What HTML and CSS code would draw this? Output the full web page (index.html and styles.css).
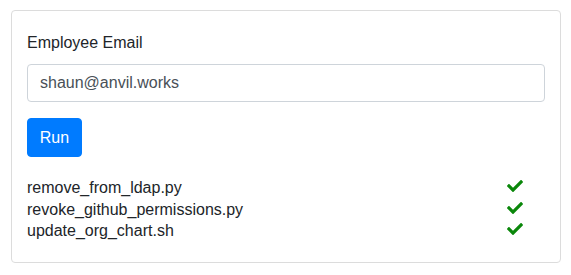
FILE: index.html
```html
<!DOCTYPE html>
<html>
<head>
<meta charset="utf-8">
<link rel="stylesheet" href="styles.css">
</head>
<body>
<div class="card">
  <label class="label" for="email">Employee Email</label>
  <input id="email" class="input" type="text" value="shaun@anvil.works">
  <button class="btn">Run</button>
  <div class="tasks">
    <div class="task"><span class="name">remove_from_ldap.py</span><span class="status"><svg class="check" viewBox="0 0 512 512"><path d="M173.898 439.404l-166.4-166.4c-9.997-9.997-9.997-26.206 0-36.204l36.203-36.204c9.997-9.998 26.207-9.998 36.204 0L192 312.69 432.095 72.596c9.997-9.997 26.207-9.997 36.204 0l36.203 36.204c9.997 9.997 9.997 26.206 0 36.204l-294.4 294.401c-9.998 9.997-26.207 9.997-36.204-.001z"/></svg></span></div>
    <div class="task"><span class="name">revoke_github_permissions.py</span><span class="status"><svg class="check" viewBox="0 0 512 512"><path d="M173.898 439.404l-166.4-166.4c-9.997-9.997-9.997-26.206 0-36.204l36.203-36.204c9.997-9.998 26.207-9.998 36.204 0L192 312.69 432.095 72.596c9.997-9.997 26.207-9.997 36.204 0l36.203 36.204c9.997 9.997 9.997 26.206 0 36.204l-294.4 294.401c-9.998 9.997-26.207 9.997-36.204-.001z"/></svg></span></div>
    <div class="task"><span class="name">update_org_chart.sh</span><span class="status"><svg class="check" viewBox="0 0 512 512"><path d="M173.898 439.404l-166.4-166.4c-9.997-9.997-9.997-26.206 0-36.204l36.203-36.204c9.997-9.998 26.207-9.998 36.204 0L192 312.69 432.095 72.596c9.997-9.997 26.207-9.997 36.204 0l36.203 36.204c9.997 9.997 9.997 26.206 0 36.204l-294.4 294.401c-9.998 9.997-26.207 9.997-36.204-.001z"/></svg></span></div>
  </div>
</div>
</body>
</html>
```

FILE: styles.css
```css
html, body {
  margin: 0;
  padding: 0;
  background: #fff;
}
body {
  padding: 10px 10px 0 11px;
  font-family: "Liberation Sans", Arial, Helvetica, sans-serif;
  font-size: 16px;
  color: #212529;
}
.card {
  width: 550px;
  box-sizing: border-box;
  border: 1px solid #dcdcdc;
  border-radius: 4px;
  padding: 20px 15px 20px 15px;
  display: flex;
  flex-direction: column;
  align-items: flex-start;
}
.label {
  display: block;
  line-height: 24px;
  margin-bottom: 9px;
}
.input {
  display: block;
  width: 100%;
  box-sizing: border-box;
  height: 38px;
  padding: 6px 12px;
  border: 1px solid #ced4da;
  border-radius: 4px;
  font-family: inherit;
  font-size: 16px;
  color: #495057;
  background: #fff;
  margin: 0;
}
.btn {
  margin-top: 16px;
  height: 39px;
  width: 55px;
  padding: 0;
  border: 1px solid #007bff;
  border-radius: 4px;
  background: #007bff;
  color: #fff;
  font-family: inherit;
  font-size: 16px;
}
.tasks {
  margin-top: 20px;
  width: 100%;
}
.task {
  display: grid;
  grid-template-columns: 1fr 38px;
  align-items: center;
  line-height: 21.5px;
  height: 21.5px;
}
.status {
  display: flex;
  align-items: center;
}
.check {
  width: 16px;
  height: 16px;
  fill: #0a870a;
  margin-top: -3px;
}
```
